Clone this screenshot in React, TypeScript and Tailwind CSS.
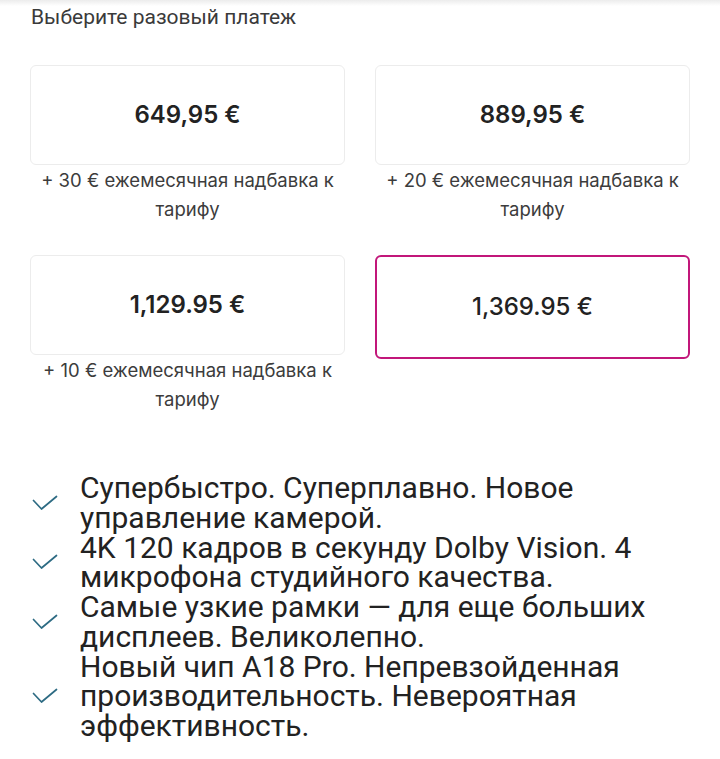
import React from "react"

type Option = {
  price: string
  extra?: string
  selected?: boolean
}

const options: Option[] = [
  { price: "649,95 €", extra: "+ 30 € ежемесячная надбавка к тарифу" },
  { price: "889,95 €", extra: "+ 20 € ежемесячная надбавка к тарифу" },
  { price: "1,129.95 €", extra: "+ 10 € ежемесячная надбавка к тарифу" },
  { price: "1,369.95 €", selected: true },
]

const features = [
  "Супербыстро. Суперплавно. Новое управление камерой.",
  "4K 120 кадров в секунду Dolby Vision. 4 микрофона студийного качества.",
  "Самые узкие рамки — для еще больших дисплеев. Великолепно.",
  "Новый чип A18 Pro. Непревзойденная производительность. Невероятная эффективность.",
]

function Check() {
  return (
    <svg width="26" height="16" viewBox="0 0 26 16" fill="none" className="shrink-0">
      <path
        d="M1.5 5.5 L9.5 14 L24.5 1.5"
        stroke="#2d6b83"
        strokeWidth="1.7"
        strokeLinecap="round"
        strokeLinejoin="round"
      />
    </svg>
  )
}

function PriceCard({ option }: { option: Option }) {
  return (
    <div className="flex flex-col">
      <div
        className={
          option.selected
            ? "flex h-[104px] items-center justify-center rounded-[6px] border-2 border-[#c2177a] bg-white"
            : "flex h-[100px] items-center justify-center rounded-[6px] border border-[#ececec] bg-white"
        }
      >
        <span
          className={
            option.selected
              ? "text-[24px] font-medium text-[#222]"
              : "text-[24px] font-semibold text-[#222]"
          }
        >
          {option.price}
        </span>
      </div>
      {option.extra && (
        <div className="px-1 pt-[1px] text-center text-[18.5px] leading-[29px] text-[#3c3c3c]">
          {option.extra}
        </div>
      )}
    </div>
  )
}

export default function App() {
  return (
    <div
      className="relative min-h-[759px] w-[720px] bg-white"
      style={{ fontFamily: "Inter, 'Noto Sans', sans-serif" }}
    >
      <div className="h-[6px] bg-gradient-to-b from-[#ececec] to-white" />
      <div className="px-[30px]">
        <div
          className="-mt-[1px] pl-[1px] text-[21px] leading-[24px] text-[#3a3a3a]"
          style={{ fontFamily: "Roboto, sans-serif" }}
        >
          Выберите разовый платеж
        </div>
        <div className="mt-[36px] grid grid-cols-2 gap-x-[30px] gap-y-[31px]">
          {options.map((o) => (
            <PriceCard key={o.price} option={o} />
          ))}
        </div>
        <div
          className="mt-[59px] flex flex-col"
          style={{ fontFamily: "Roboto, sans-serif" }}
        >
          {features.map((f) => (
            <div key={f} className="flex items-center">
              <div className="w-[50px] shrink-0 pl-[2px]">
                <Check />
              </div>
              <div className="w-[610px] text-[30px] leading-[29.75px] text-[#222]">{f}</div>
            </div>
          ))}
        </div>
      </div>
    </div>
  )
}
